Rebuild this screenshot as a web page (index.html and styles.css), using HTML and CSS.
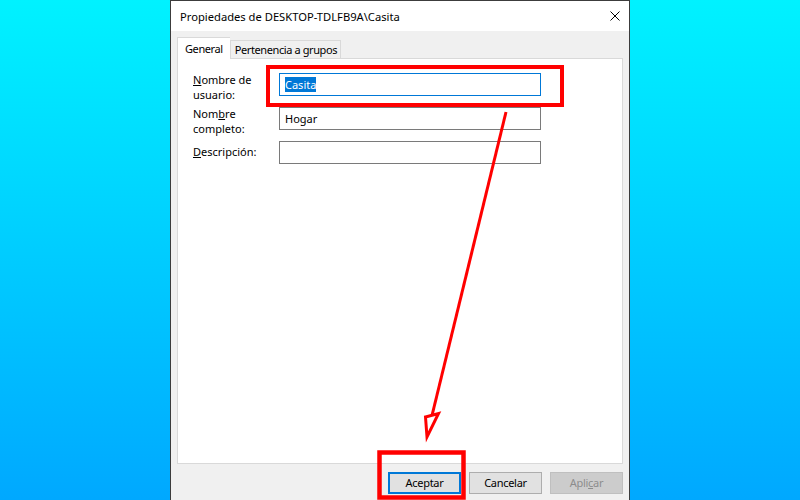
FILE: index.html
```html
<!DOCTYPE html>
<html lang="es">
<head>
    <meta charset="UTF-8">
    <meta name="viewport" content="width=device-width, initial-scale=1.0">
    <title>Propiedades de DESKTOP-TDLFB9A\Casita</title>
    <link rel="stylesheet" href="styles.css">
</head>
<body>
    <div class="dialog">
        <div class="titlebar">
            <span class="title">Propiedades de DESKTOP-TDLFB9A\Casita</span>
            <svg class="close" width="10" height="10" viewBox="0 0 10 10">
                <path d="M0.5 0.5 L9.5 9.5 M9.5 0.5 L0.5 9.5" stroke="#000" stroke-width="1" fill="none"/>
            </svg>
        </div>
        <div class="content">
            <div class="tabs">
                <div class="tab active">General</div>
                <div class="tab">Pertenencia a grupos</div>
            </div>
            <div class="panel">
                <div class="row">
                    <div class="label"><u>N</u>ombre de<br>usuario:</div>
                    <div class="field focused"><span class="selected">Casita</span></div>
                </div>
                <div class="row">
                    <div class="label">Nom<u>b</u>re<br>completo:</div>
                    <div class="field">Hogar</div>
                </div>
                <div class="row single">
                    <div class="label"><u>D</u>escripción:</div>
                    <div class="field"></div>
                </div>
            </div>
            <div class="buttons">
                <div class="button default">Aceptar</div>
                <div class="button">Cancelar</div>
                <div class="button disabled">Apli<u>c</u>ar</div>
            </div>
        </div>
    </div>

    <!-- red annotations drawn over the screenshot -->
    <svg class="marks" width="800" height="500" viewBox="0 0 800 500">
        <rect x="268" y="67" width="294" height="38" fill="none" stroke="#f00" stroke-width="4"/>
        <rect x="379.5" y="452.5" width="84" height="45" fill="none" stroke="#f00" stroke-width="4.5"/>
        <line x1="506" y1="112" x2="432" y2="415.5" stroke="#f00" stroke-width="3"/>
        <polygon points="425.5,417 438.5,413.5 427,437" fill="#fff" stroke="#f00" stroke-width="3" stroke-linejoin="miter"/>
    </svg>
</body>
</html>
```

FILE: styles.css
```css
body {
    margin: 0;
    height: 500px;
    overflow: hidden;
    display: flex;
    justify-content: center;
    background: linear-gradient(to bottom, #00f2ff, #00a8ff);
    font-family: "Noto Sans", "Open Sans", sans-serif;
    font-size: 11px;
    color: #000;
}
.dialog {
    width: 460px;
    height: 520px;
    box-sizing: border-box;
    border: 1px solid #3c3c3c;
    background: #f0f0f0;
    display: flex;
    flex-direction: column;
}
.titlebar {
    height: 30px;
    background: #fff;
    display: flex;
    align-items: center;
    justify-content: space-between;
    padding: 0 9px;
    font-size: 11.2px;
}
.close {
    display: block;
}
.content {
    padding: 6px 6px 0;
}
.tabs {
    display: flex;
    align-items: flex-end;
    height: 21px;
    position: relative;
    z-index: 1;
    letter-spacing: -0.4px;
}
.tab {
    height: 18px;
    line-height: 18px;
    padding: 0 3px 0 4px;
    border: 1px solid #d9d9d9;
    border-bottom: none;
    background: #f0f0f0;
    box-sizing: border-box;
}
.tab.active {
    height: 22px;
    line-height: 21px;
    padding: 0 7px;
    background: #fff;
    margin-bottom: -1px;
    border-right: none;
}
.panel {
    height: 406px;
    box-sizing: border-box;
    border: 1px solid #d9d9d9;
    background: #fff;
    padding: 14px 15px 0;
}
.row {
    display: flex;
    align-items: flex-start;
    height: 23px;
    margin-bottom: 11px;
}
.row.single {
    align-items: center;
}
.label {
    width: 86px;
    line-height: 15px;
    margin-top: -1px;
}
.row.single .label {
    margin-top: -2px;
}
.field {
    width: 262px;
    height: 23px;
    box-sizing: border-box;
    border: 1px solid #7a7a7a;
    padding: 0 5px;
    line-height: 21px;
}
.field.focused {
    border-color: #0078d7;
}
.selected {
    background: #0078d7;
    color: #fff;
}
.buttons {
    display: flex;
    justify-content: flex-end;
    gap: 8px;
    margin-top: 8px;
    letter-spacing: -0.3px;
}
.button {
    width: 73px;
    height: 22px;
    box-sizing: border-box;
    border: 1px solid #adadad;
    background: #e1e1e1;
    text-align: center;
    line-height: 20px;
}
.button.default {
    border: 2px solid #0078d7;
    line-height: 18px;
}
.button.disabled {
    background: #cccccc;
    border-color: #bfbfbf;
    color: #8c8c8c;
}
.marks {
    position: absolute;
    left: 0;
    top: 0;
}
```
